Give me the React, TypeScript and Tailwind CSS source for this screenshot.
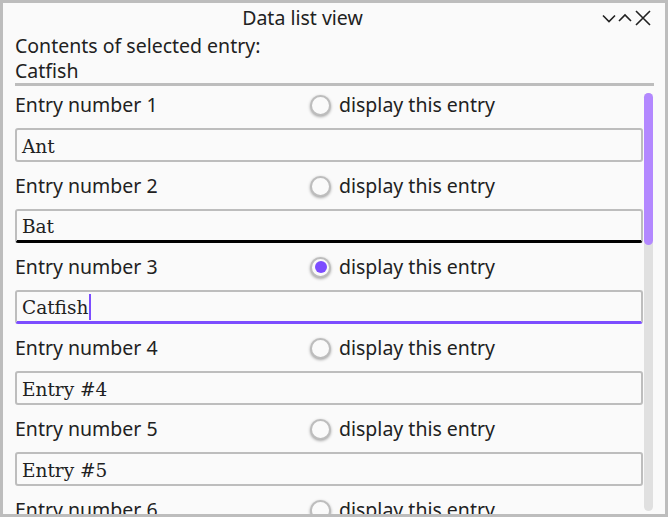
import { useState } from "react";

const entries = ["Ant", "Bat", "Catfish", "Entry #4", "Entry #5", "Entry #6"];

const sans = { fontFamily: '"Noto Sans", "DejaVu Sans", sans-serif' };
const serif = { fontFamily: '"DejaVu Serif", "Liberation Serif", serif' };

function Radio({ checked }: { checked: boolean }) {
  return (
    <span className="flex h-[21px] w-[21px] shrink-0 items-center justify-center rounded-full border-2 border-[#bdbdbd] bg-[#fafafa] shadow-[0_1px_3px_rgba(0,0,0,0.35)]">
      {checked && <span className="h-[12px] w-[12px] rounded-full bg-[#7c4dff]" />}
    </span>
  );
}

function WindowButtons() {
  return (
    <div className="flex items-center gap-[2px] text-[#212121]">
      <svg width="14" height="14" viewBox="0 0 14 14" fill="none" stroke="currentColor" strokeWidth="1.6">
        <path d="M1 4.5 7 10.5 13 4.5" />
      </svg>
      <svg width="14" height="14" viewBox="0 0 14 14" fill="none" stroke="currentColor" strokeWidth="1.6">
        <path d="M1 10 7 4 13 10" />
      </svg>
      <svg width="18" height="18" viewBox="0 0 18 18" fill="none" stroke="currentColor" strokeWidth="1.6">
        <path d="M2 2 16 16M16 2 2 16" />
      </svg>
    </div>
  );
}

export default function App() {
  const [selected, setSelected] = useState(2);

  return (
    <div
      className="flex h-[517px] w-[668px] flex-col overflow-hidden border-[3px] border-[#bdbdbd] bg-[#fafafa] text-[19.5px] text-[#212121]"
      style={sans}
    >
      <div className="flex h-[30px] shrink-0 items-center pr-[13px]">
        <span className="flex-1 text-center leading-none">Data list view</span>
        <WindowButtons />
      </div>

      <div className="px-[12px] pr-[11px]">
        <div className="leading-[25px]">Contents of selected entry:</div>
        <div className="leading-[25px]">{entries[selected]}</div>
        <div className="h-[3px] bg-[#bdbdbd]" />
      </div>

      <div className="mt-[2px] flex min-h-0 flex-1 pl-[12px] pr-[12px]">
        <div className="min-w-0 flex-1 overflow-hidden">
          {entries.map((e, i) => (
            <div key={i} className="mb-[7px]">
              <div className="flex h-[40px] items-center pb-[6px]">
                <span className="w-[295px]">Entry number {i + 1}</span>
                <button className="flex items-center gap-[8px]" onClick={() => setSelected(i)}>
                  <Radio checked={i === selected} />
                  <span>display this entry</span>
                </button>
              </div>
              <div
                className={`flex h-[34px] items-center rounded-[3px] border-2 border-[#bdbdbd] px-[5px] pt-[3px] text-[18.5px] ${
                  i === 1 ? "border-b-[3px] border-b-black" : ""
                } ${i === 2 ? "border-b-[3px] border-b-[#7c4dff]" : ""}`}
                style={serif}
              >
                <span>{e}</span>
                {i === 2 && <span className="mb-[2px] ml-[1px] h-[26px] w-[2px] bg-[#7c4dff]" />}
              </div>
            </div>
          ))}
        </div>
        <div className="ml-[1px] mt-[5px] mb-[3px] flex w-[9px] flex-col rounded-full bg-[#e0e0e0]">
          <div className="h-[152px] rounded-full bg-[#b388ff]" />
        </div>
      </div>
    </div>
  );
}
